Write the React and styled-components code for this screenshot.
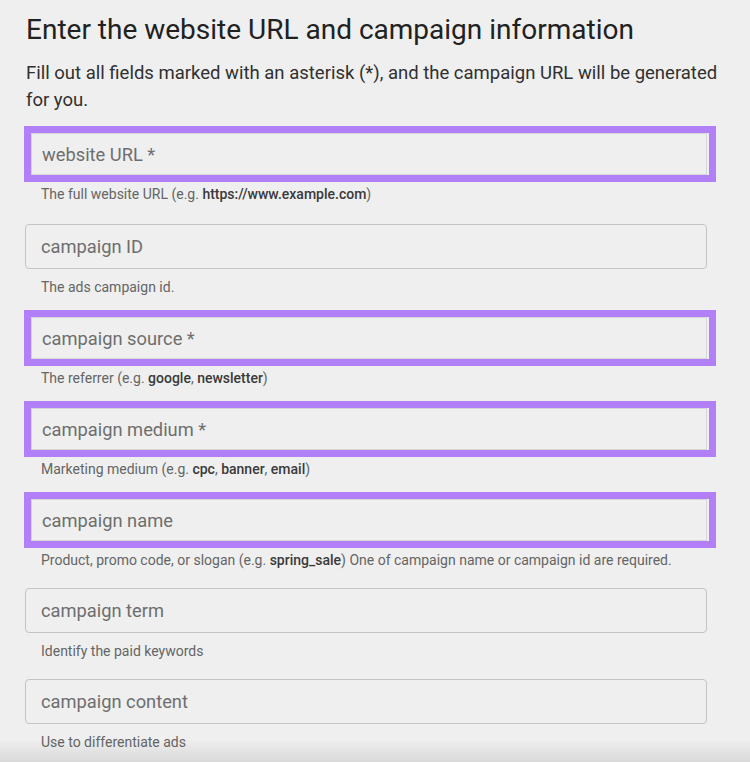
import styled, { createGlobalStyle } from "styled-components";

const GlobalStyle = createGlobalStyle`
  html, body {
    margin: 0;
    padding: 0;
    background: #efefef;
    font-family: Roboto, "Noto Sans", "Liberation Sans", sans-serif;
    overflow: hidden;
  }
  body::after {
    content: "";
    position: fixed;
    left: 0;
    right: 0;
    bottom: 0;
    height: 22px;
    background: linear-gradient(to bottom, rgba(0, 0, 0, 0), rgba(0, 0, 0, 0.09));
    pointer-events: none;
  }
`;

const fields = [
  {
    label: "website URL *",
    marked: true,
    help: (
      <>
        The full website URL (e.g. <b>https://www.example.com</b>)
      </>
    ),
  },
  { label: "campaign ID", help: "The ads campaign id." },
  {
    label: "campaign source *",
    marked: true,
    help: (
      <>
        The referrer (e.g. <b>google</b>, <b>newsletter</b>)
      </>
    ),
  },
  {
    label: "campaign medium *",
    marked: true,
    help: (
      <>
        Marketing medium (e.g. <b>cpc</b>, <b>banner</b>, <b>email</b>)
      </>
    ),
  },
  {
    label: "campaign name",
    marked: true,
    help: (
      <>
        Product, promo code, or slogan (e.g. <b>spring_sale</b>) One of campaign
        name or campaign id are required.
      </>
    ),
  },
  { label: "campaign term", help: "Identify the paid keywords" },
  { label: "campaign content", help: "Use to differentiate ads" },
];

export default function App() {
  return (
    <>
      <GlobalStyle />
      <Styled.Page>
        <Styled.Title>Enter the website URL and campaign information</Styled.Title>
        <Styled.Intro>
          Fill out all fields marked with an asterisk (*), and the campaign URL
          will be generated for you.
        </Styled.Intro>
        <Styled.Form>
          {fields.map((field) => (
            <Styled.Field key={field.label}>
              <Styled.Highlight $marked={field.marked}>
                <Styled.Input $marked={field.marked} placeholder={field.label} />
              </Styled.Highlight>
              <Styled.Help>{field.help}</Styled.Help>
            </Styled.Field>
          ))}
        </Styled.Form>
      </Styled.Page>
    </>
  );
}

const Styled = {
  Page: styled.div`
    padding: 13px 0 0 25px;
    width: 682px;
  `,

  Title: styled.h1`
    margin: 0 0 0 1px;
    font-size: 28px;
    font-weight: 400;
    line-height: 34px;
    color: #212121;
  `,

  Intro: styled.p`
    margin: 13px 0 0 1px;
    width: 712px;
    font-size: 18.5px;
    line-height: 27px;
    color: #303030;
  `,

  Form: styled.div`
    display: flex;
    flex-direction: column;
    gap: 20px;
    margin-top: 17px;
  `,

  Field: styled.div`
    display: flex;
    flex-direction: column;
    gap: 10px;

    &:first-child {
      margin-bottom: 2px;
    }
  `,

  Highlight: styled.div`
    display: flex;
    height: ${({ $marked }) => ($marked ? "42px" : "45px")};
    border: ${({ $marked }) => ($marked ? "7px solid #b17ff6" : "none")};
    margin: ${({ $marked }) => ($marked ? "-5px -9px -6px -1px" : "0")};
  `,

  Input: styled.input`
    flex: 1;
    min-width: 0;
    box-sizing: border-box;
    height: 100%;
    margin: ${({ $marked }) => ($marked ? "0 2px 0 0" : "0")};
    padding: 0 0 0 ${({ $marked }) => ($marked ? "10px" : "15px")};
    border: 1px solid ${({ $marked }) => ($marked ? "#d6d6d6" : "#c4c4c4")};
    border-radius: ${({ $marked }) => ($marked ? "0" : "4px")};
    background: #efefef;
    font-family: Roboto, "Noto Sans", "Liberation Sans", sans-serif;
    font-size: 18.3px;
    color: #333;
    outline: none;

    &::placeholder {
      color: #6e6e6e;
    }
  `,

  Help: styled.div`
    padding-left: 16px;
    font-size: 14px;
    line-height: 16px;
    color: #656565;
    white-space: nowrap;

    b {
      font-weight: 500;
      color: #3a3a3a;
    }
  `,
};
